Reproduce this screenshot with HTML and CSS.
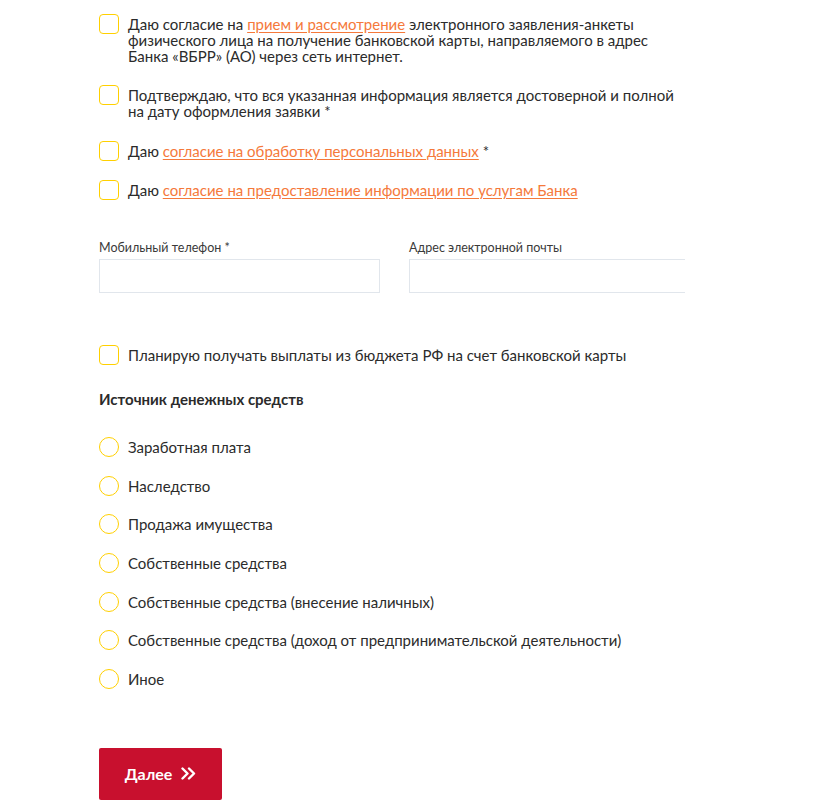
FILE: index.html
```html
<!DOCTYPE html>
<html lang="ru">
<head>
<meta charset="utf-8">
<link rel="stylesheet" href="styles.css">
</head>
<body>
<div class="form">
  <div class="checks">
    <label class="check c1">
      <span class="box"></span>
      <span class="text">Даю согласие на <a href="#">прием и рассмотрение</a> электронного заявления-анкеты физического лица на получение банковской карты, направляемого в адрес Банка «ВБРР» (АО) через сеть интернет.</span>
    </label>
    <label class="check c2">
      <span class="box"></span>
      <span class="text">Подтверждаю, что вся указанная информация является достоверной и полной на дату оформления заявки *</span>
    </label>
    <label class="check c3">
      <span class="box"></span>
      <span class="text">Даю <a href="#">согласие на обработку персональных данных</a> *</span>
    </label>
    <label class="check">
      <span class="box"></span>
      <span class="text">Даю <a href="#">согласие на предоставление информации по услугам Банка</a></span>
    </label>
  </div>

  <div class="fields">
    <div class="field">
      <div class="flabel">Мобильный телефон *</div>
      <div class="input"></div>
    </div>
    <div class="field">
      <div class="flabel">Адрес электронной почты</div>
      <div class="input"></div>
    </div>
  </div>

  <label class="check single">
    <span class="box"></span>
    <span class="text">Планирую получать выплаты из бюджета РФ на счет банковской карты</span>
  </label>

  <div class="heading">Источник денежных средств</div>

  <div class="radios">
    <label class="radio"><span class="circle"></span><span class="text">Заработная плата</span></label>
    <label class="radio"><span class="circle"></span><span class="text">Наследство</span></label>
    <label class="radio"><span class="circle"></span><span class="text">Продажа имущества</span></label>
    <label class="radio"><span class="circle"></span><span class="text">Собственные средства</span></label>
    <label class="radio"><span class="circle"></span><span class="text">Собственные средства (внесение наличных)</span></label>
    <label class="radio"><span class="circle"></span><span class="text">Собственные средства (доход от предпринимательской деятельности)</span></label>
    <label class="radio"><span class="circle"></span><span class="text">Иное</span></label>
  </div>

  <button class="next">Далее
    <svg width="15" height="13" viewBox="0 0 15 13" aria-hidden="true"><path d="M1.5 1.5 L6.5 6.5 L1.5 11.5 M8 1.5 L13 6.5 L8 11.5" fill="none" stroke="#fff" stroke-width="2.4" stroke-linecap="round" stroke-linejoin="round"/></svg>
  </button>
</div>
</body>
</html>
```
FILE: styles.css
```css
* { box-sizing: border-box; }
body {
  margin: 0;
  background: #fff;
  font-family: Lato, "Open Sans", "Liberation Sans", sans-serif;
  color: #2b2b2b;
}
.form {
  width: 586px;
  margin-left: 99px;
  padding-top: 14px;
  overflow: hidden;
}
.checks {
  display: flex;
  flex-direction: column;
}
.c1 { margin-bottom: 21px; }
.c2 { margin-bottom: 22px; }
.c3 { margin-bottom: 19px; }
.check, .radio {
  display: flex;
  align-items: flex-start;
  gap: 9px;
}
.box {
  flex: none;
  width: 20px;
  height: 20px;
  border: 1.5px solid #ffd000;
  border-radius: 4px;
}
.text {
  font-size: 15px;
  line-height: 16px;
  padding-top: 2px;
}
.text a {
  color: #f5793b;
  text-decoration: underline;
  text-underline-offset: 2px;
}
.fields {
  display: flex;
  gap: 29px;
  margin-top: 40px;
}
.field { flex: none; width: 281px; }
.flabel {
  font-size: 12.5px;
  line-height: 16px;
  color: #3a3a3a;
  margin-bottom: 3px;
}
.input {
  height: 34px;
  border: 1px solid #e1e6ec;
  background: #fff;
}
.single { margin-top: 52px; }
.heading {
  margin-top: 26px;
  font-size: 15px;
  line-height: 16px;
  font-weight: 700;
  color: #2b2b2b;
}
.radios {
  display: flex;
  flex-direction: column;
  gap: 18.67px;
  margin-top: 30px;
}
.circle {
  flex: none;
  width: 20px;
  height: 20px;
  border: 1.5px solid #ffd000;
  border-radius: 50%;
}
.next {
  margin-top: 59px;
  width: 123px;
  height: 52px;
  border: none;
  border-radius: 2px;
  background: #c8102e;
  color: #fff;
  font-family: Lato, "Open Sans", "Liberation Sans", sans-serif;
  font-size: 16px;
  font-weight: 700;
  display: flex;
  align-items: center;
  justify-content: center;
  gap: 9px;
  padding: 0;
}
```
